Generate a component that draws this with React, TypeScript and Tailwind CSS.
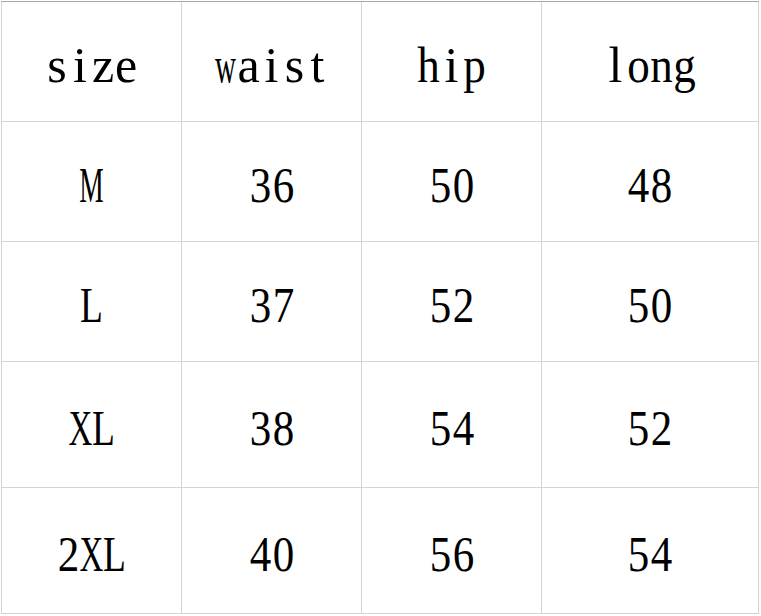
import React from 'react'

const rows = [
  ['size', 'waist', 'hip', 'long'],
  ['M', '36', '50', '48'],
  ['L', '37', '52', '50'],
  ['XL', '38', '54', '52'],
  ['2XL', '40', '56', '54'],
]

const rowHeights = ['h-[120px]', 'h-[120px]', 'h-[120px]', 'h-[126px]', 'h-[126px]']
const colWidths = ['w-[180px]', 'w-[180px]', 'w-[180px]', 'w-[217px]']

// squeeze wide serif glyphs into a half-width cell, like SimSun's latin
const squeeze: Record<string, string> = {
  M: 'scale-x-[0.55]',
  X: 'scale-x-[0.66]',
  L: 'scale-x-[0.75]',
  w: 'scale-x-[0.58]',
  h: 'scale-x-[0.9]',
  p: 'scale-x-[0.9]',
  o: 'scale-x-[0.9]',
  n: 'scale-x-[0.9]',
  g: 'scale-x-[0.9]',
}

function Glyph({ ch }: { ch: string }) {
  const cls = squeeze[ch] ?? (/[0-9]/.test(ch) ? 'scale-x-[0.86]' : '')
  return (
    <span className={`inline-flex w-[23px] justify-center ${cls}`}>
      <span className="shrink-0">{ch}</span>
    </span>
  )
}

function Cell({ text, w, h }: { text: string; w: string; h: string }) {
  return (
    <div
      className={`${w} ${h} flex items-center justify-center border-r border-b border-[#d4d4d4] pt-[6px] font-['Liberation_Serif','Times_New_Roman',serif] text-[50px] leading-none text-black`}
    >
      <span className="flex">
        {text.split('').map((ch, i) => (
          <Glyph key={i} ch={ch} />
        ))}
      </span>
    </div>
  )
}

export default function App() {
  return (
    <div className="w-[761px] h-[616px] bg-white">
      <div className="ml-[1px] mt-[1px] inline-flex flex-col border-l border-t border-l-[#d4d4d4] border-t-[#a6a6a6]">
        {rows.map((row, r) => (
          <div key={r} className="flex">
            {row.map((text, c) => (
              <Cell key={c} text={text} w={colWidths[c]} h={rowHeights[r]} />
            ))}
          </div>
        ))}
      </div>
    </div>
  )
}
